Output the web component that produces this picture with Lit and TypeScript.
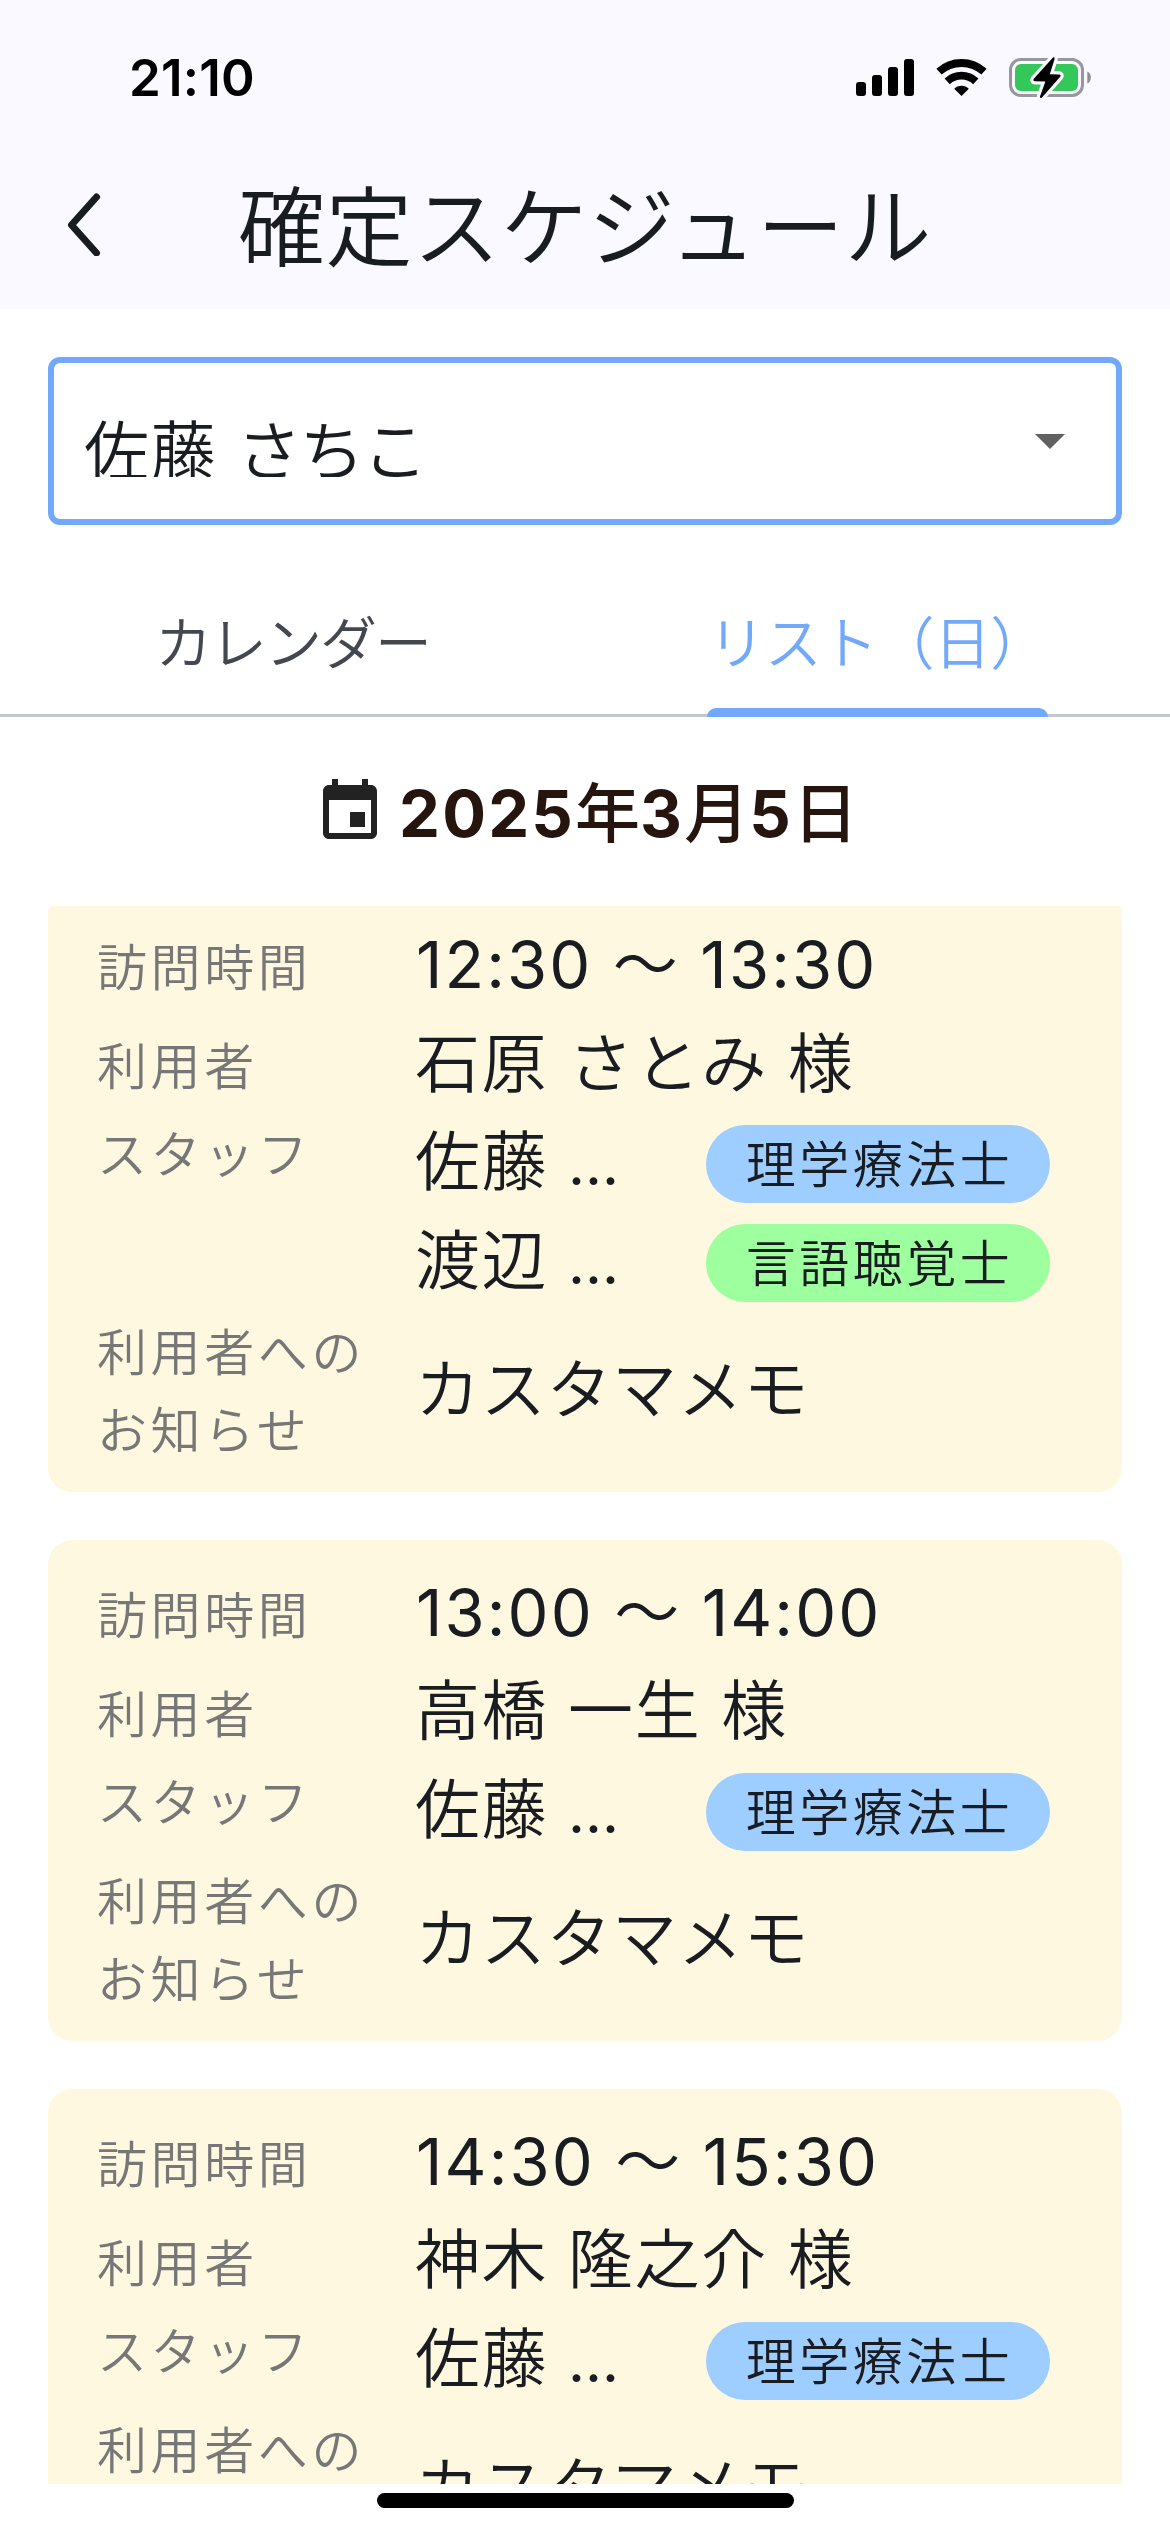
import { LitElement, html, css, svg } from "lit";
import { customElement, property } from "lit/decorators.js";

interface Staff {
  name: string;
  role: string;
  tone: "blue" | "green";
}

interface Visit {
  from: string;
  to: string;
  client: string;
  staff: Staff[];
  memo: string;
}

const SATO: Staff = { name: "佐藤", role: "理学療法士", tone: "blue" };

const VISITS: Visit[] = [
  {
    from: "12:30",
    to: "13:30",
    client: "石原 さとみ 様",
    staff: [SATO, { name: "渡辺", role: "言語聴覚士", tone: "green" }],
    memo: "カスタマメモ",
  },
  { from: "13:00", to: "14:00", client: "高橋 一生 様", staff: [SATO], memo: "カスタマメモ" },
  { from: "14:30", to: "15:30", client: "神木 隆之介 様", staff: [SATO], memo: "カスタマメモ" },
];

@customElement("status-bar")
class StatusBar extends LitElement {
  static styles = css`
    :host {
      display: flex;
      align-items: center;
      justify-content: space-between;
      height: 156px;
      padding: 0 75px 0 129px;
      box-sizing: border-box;
    }
    .clock {
      font: 600 51px/60px Inter, "Liberation Sans", sans-serif;
      letter-spacing: 0.2px;
      color: #000;
    }
    .icons {
      display: block;
      width: 240px;
      height: 60px;
    }
  `;

  render() {
    const bars = [
      [1, 34, 14],
      [17, 27, 21],
      [33, 19, 29],
      [49, 11, 37],
    ];
    const bolt =
      "M198 9.6 L178.8 30.8 Q177.6 33 180 33.2 L190.4 33.4 L185 48.4 Q185 50.8 187 49.4 L205.2 28.8 Q206.4 26.6 204 26.4 L194.8 26.2 L199.6 11 Q199.8 8.6 198 9.6Z";
    return html`
      <span class="clock">21:10</span>
      <svg class="icons" viewBox="0 0 240 60">
        ${bars.map(([x, y, h]) => svg`<rect x=${x} y=${y} width="10" height=${h} rx="3" />`)}
        <g fill="none" stroke="#000" stroke-width="7.8">
          <path d="M84 23.7 A33.4 33.4 0 0 1 129 23.7" />
          <path d="M92.2 33.3 A21 21 0 0 1 120.8 33.3" />
        </g>
        <path d="M106.5 48 L99.2 40.8 A10 10 0 0 1 113.8 40.8 Z" />
        <rect x="155.5" y="11.5" width="72" height="36" rx="10.5" fill="none" stroke="#98979d" stroke-width="3" />
        <rect x="160" y="16" width="63" height="27" rx="6" fill="#34c759" />
        <path d="M232.3 23.5 C237 25 237 34 232.3 35.5 Z" fill="#8e8d92" />
        <path d=${bolt} fill="none" stroke="#faf9ff" stroke-width="6.4" stroke-linejoin="round" />
        <path d=${bolt} fill="#000" />
      </svg>
    `;
  }
}

@customElement("visit-card")
class VisitCard extends LitElement {
  @property({ attribute: false }) visit!: Visit;

  static styles = css`
    :host {
      display: block;
      flex: none;
      box-sizing: border-box;
      padding: 24px 72px 22px 49px;
      border-radius: 24px;
      background: #fff8e1;
      font-family: Inter, "Noto Sans CJK JP", sans-serif;
      font-weight: 350;
    }
    .row {
      display: grid;
      grid-template-columns: 318px 1fr;
      align-items: center;
    }
    .row.top {
      align-items: start;
    }
    .row.note {
      height: 159px;
    }
    .label {
      padding-top: 3px;
      color: #777;
      font-size: 50px;
      line-height: 78px;
      letter-spacing: 3.6px;
      white-space: pre-line;
    }
    .label.low {
      padding-top: 6px;
    }
    .value {
      height: 98.67px;
      color: #191c20;
      font-size: 65px;
      line-height: 98.67px;
      letter-spacing: 1.6px;
      white-space: pre;
    }
    .time {
      padding-left: 1px;
      font-weight: 400;
      letter-spacing: 2.1px;
    }
    .wave {
      font-weight: 350;
    }
    .memo {
      letter-spacing: 0.7px;
    }
    .staff {
      display: flex;
      align-items: center;
      justify-content: space-between;
    }
    .dots {
      font-size: 59px;
      font-weight: 400;
      line-height: 0;
    }
    .chip {
      display: flex;
      justify-content: center;
      box-sizing: border-box;
      width: 344px;
      height: 78px;
      margin-top: 3px;
      border-radius: 39px;
      font-size: 50px;
      line-height: 81px;
      letter-spacing: 3.5px;
      text-indent: 3px;
    }
    .blue {
      background: #9ecdff;
    }
    .green {
      background: #9eff9e;
    }
  `;

  render() {
    const { from, to, client, staff, memo } = this.visit;
    return html`
      <div class="row">
        <div class="label low">訪問時間</div>
        <div class="value time">${from} <span class="wave">〜</span> ${to}</div>
      </div>
      <div class="row">
        <div class="label low">利用者</div>
        <div class="value">${client}</div>
      </div>
      <div class="row top">
        <div class="label">スタッフ</div>
        <div>
          ${staff.map(
            (s) => html`<div class="value staff"><span>${s.name} <span class="dots">…</span></span><span class="chip ${s.tone}">${s.role}</span></div>`,
          )}
        </div>
      </div>
      <div class="row note">
        <div class="label">${"利用者への\nお知らせ"}</div>
        <div class="value memo">${memo}</div>
      </div>
    `;
  }
}

@customElement("app-root")
class AppRoot extends LitElement {
  static styles = css`
    :host {
      display: flex;
      flex-direction: column;
      width: 1170px;
      height: 2532px;
      overflow: hidden;
      background: #fff;
      color: #191c20;
      font-family: Inter, "Noto Sans CJK JP", sans-serif;
      font-weight: 350;
    }
    .header {
      flex: none;
      height: 309px;
      background: #faf9ff;
    }
    .bar {
      display: grid;
      grid-template-columns: 168px 1fr 168px;
      align-items: center;
      height: 136px;
    }
    .back {
      display: block;
      width: 40px;
      height: 64px;
      margin-left: 64px;
    }
    .title {
      box-sizing: border-box;
      height: 136px;
      margin: 0;
      padding-top: 5px;
      font-size: 87px;
      font-weight: 350;
      line-height: 136px;
      letter-spacing: 0.5px;
      text-align: center;
      white-space: nowrap;
    }
    .select {
      flex: none;
      display: flex;
      align-items: center;
      justify-content: space-between;
      box-sizing: border-box;
      height: 168px;
      margin: 48px 48px 0;
      padding: 0 51px 0 30px;
      border: 6px solid #73a9fc;
      border-radius: 12px;
    }
    .selected {
      height: 72px;
      overflow: hidden;
      font-size: 65px;
      line-height: 94px;
      letter-spacing: 1.4px;
    }
    .kana {
      letter-spacing: -2px;
    }
    .caret {
      display: block;
      width: 30px;
      height: 15px;
    }
    .tabs {
      flex: none;
      display: grid;
      grid-template-columns: 1fr 1fr;
      box-sizing: border-box;
      height: 144px;
      margin-top: 48px;
      border-bottom: 3px solid #c3c6cf;
      font-size: 57px;
      line-height: 141px;
    }
    .tab {
      display: flex;
      flex-direction: column;
      align-items: center;
      height: 144px;
      color: #43474e;
      letter-spacing: -2px;
    }
    .tab.active {
      color: #73a9fc;
      letter-spacing: -0.6px;
    }
    .tab.active::after {
      content: "";
      width: 341px;
      height: 9px;
      margin-top: -6px;
      border-radius: 9px 9px 0 0;
      background: #73a9fc;
    }
    .date {
      flex: none;
      display: flex;
      align-items: center;
      box-sizing: border-box;
      height: 189px;
      padding-left: 314px;
      gap: 13px;
      color: #25150e;
      font-size: 65px;
      font-weight: 700;
      letter-spacing: 2.2px;
    }
    .date svg {
      flex: none;
      width: 72px;
      height: 72px;
      margin-top: 1px;
    }
    .day {
      margin-top: -6px;
    }
    .unit {
      font-weight: 500;
      letter-spacing: 0;
    }
    .list {
      flex: none;
      display: flex;
      flex-direction: column;
      gap: 48px;
      height: 1578px;
      padding: 0 48px;
      overflow: hidden;
    }
    .list visit-card:first-child {
      margin-top: -14px;
    }
    .home {
      flex: none;
      width: 417px;
      height: 15px;
      margin: 9px auto 0;
      border-radius: 8px;
      background: #000;
    }
  `;

  render() {
    return html`
      <header class="header">
        <status-bar></status-bar>
        <div class="bar">
          <svg class="back" viewBox="0 0 40 64">
            <path d="M32.5 5 L7.5 33 L32.5 61" fill="none" stroke="#191c20" stroke-width="7" stroke-linecap="round" stroke-linejoin="round" />
          </svg>
          <h1 class="title">確定スケジュール</h1>
        </div>
      </header>
      <div class="select">
        <div class="selected">佐藤 <span class="kana">さちこ</span></div>
        <svg class="caret" viewBox="0 0 30 15"><path d="M0 0H30L15 15Z" fill="#616161" /></svg>
      </div>
      <nav class="tabs">
        <div class="tab">カレンダー</div>
        <div class="tab active">リスト（日）</div>
      </nav>
      <div class="date">
        <svg viewBox="0 0 24 24" fill="#222">
          <path d="M17 12h-5v5h5v-5zM16 1v2H8V1H6v2H5c-1.11 0-1.99.9-1.99 2L3 19c0 1.1.89 2 2 2h14c1.1 0 2-.9 2-2V5c0-1.1-.9-2-2-2h-1V1h-2zm3 18H5V8h14v11z" />
        </svg>
        <span class="day">2025<span class="unit">年</span>3<span class="unit">月</span>5<span class="unit">日</span></span>
      </div>
      <main class="list">${VISITS.map((v) => html`<visit-card .visit=${v}></visit-card>`)}</main>
      <div class="home"></div>
    `;
  }
}
